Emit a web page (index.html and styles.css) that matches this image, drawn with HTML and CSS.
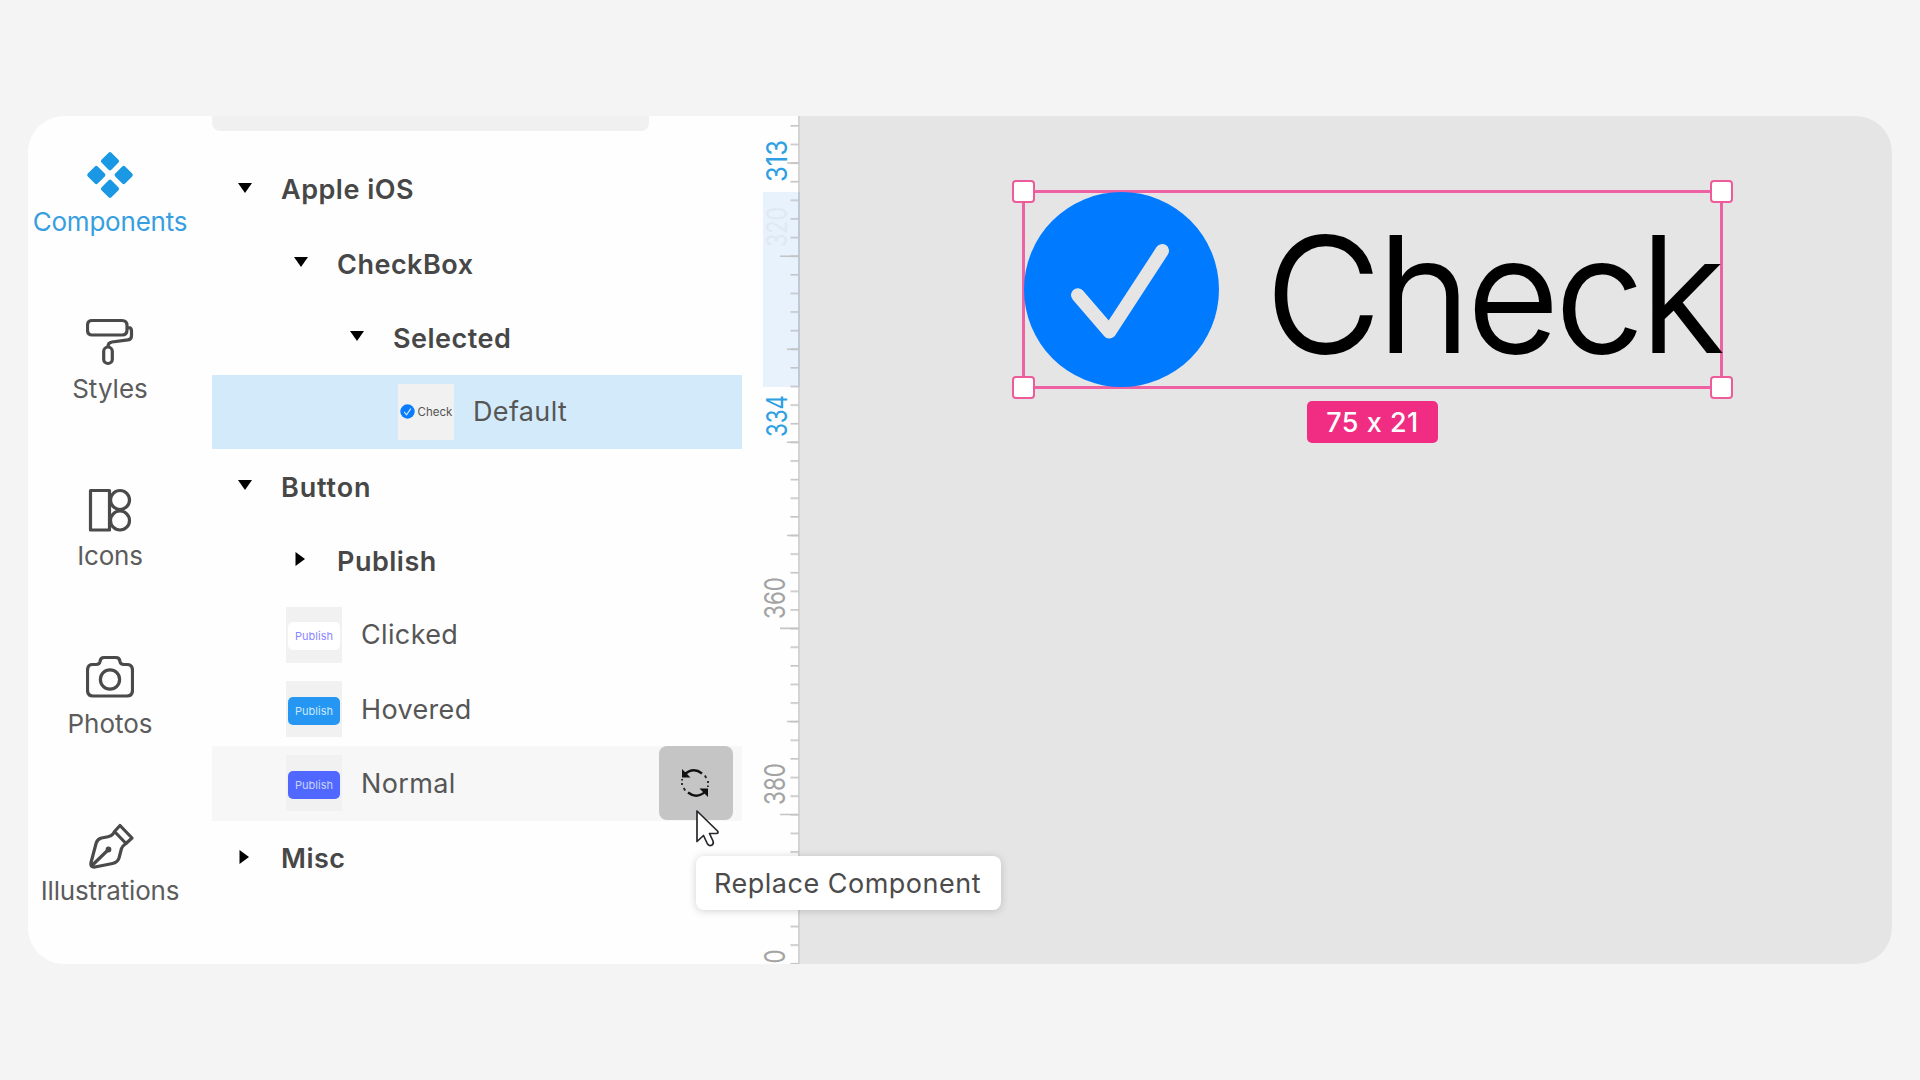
FILE: index.html
```html
<!DOCTYPE html>
<html lang="en">
<head>
<meta charset="utf-8">
<title>Components</title>
<link rel="stylesheet" href="styles.css">
</head>
<body>
<main class="app">
  <nav class="nav">
    <a class="nav-item active">
      <svg class="nav-icon" viewBox="0 0 48 48"><g fill="#1a98e4"><rect x="17" y="3.2" width="14" height="14" rx="2" transform="rotate(45 24 10.2)"/><rect x="3.3" y="17" width="14" height="14" rx="2" transform="rotate(45 10.3 24)"/><rect x="30.7" y="17" width="14" height="14" rx="2" transform="rotate(45 37.7 24)"/><rect x="17" y="30.8" width="14" height="14" rx="2" transform="rotate(45 24 37.8)"/></g></svg>
      <span class="tight">Components</span>
    </a>
    <a class="nav-item">
      <svg class="nav-icon" viewBox="0 0 48 48"><path d="M6 2.5H36Q41 2.5 41 7.500V12Q41 17 36 17H6Q1.500 17 1.500 12V7.500Q1.500 2.500 6 2.500ZM41 9.500H42.500Q45.500 9.500 45.500 13V18Q45.500 21.500 42 21.900L26 24Q22 24.500 22 28.500V29"/><rect x="17.700" y="29" width="8.600" height="16.500" rx="4.300"/></svg>
      <span>Styles</span>
    </a>
    <a class="nav-item">
      <svg class="nav-icon" viewBox="0 0 48 48"><path d="M4.500 4.500H23.500V44H4.500Z"/><circle cx="34" cy="14" r="9.500"/><circle cx="34" cy="34.500" r="9.500"/></svg>
      <span class="tight">Icons</span>
    </a>
    <a class="nav-item">
      <svg class="nav-icon" viewBox="0 0 48 48"><path d="M6.500 11.500H10Q13.500 11.500 14 8.500Q14.500 4.500 18 4.500H30Q33.500 4.500 34 8.500Q34.500 11.500 38 11.500H41Q46.500 11.500 46.500 17.500V37Q46.500 43 41 43H7Q1.500 43 1.500 37V17.500Q1.500 11.500 6.500 11.500Z"/><circle cx="24" cy="26.500" r="9.600"/></svg>
      <span>Photos</span>
    </a>
    <a class="nav-item">
      <svg class="nav-icon" viewBox="0 0 48 48"><path d="M34 4.500L46 17L40 22.500L28.500 10.500ZM28.500 10.500L27 13Q25.500 15 22 15.700L15.500 17Q11.500 18 10.200 22L5 41.500Q4 46.500 9 46L26.500 42.500Q31.500 41.500 33 37L35.500 27.500Q36.300 25 40 22.500M5.500 45L22.500 28.500"/><circle cx="22.500" cy="28.500" r="1.300" fill="#4a4a4a"/></svg>
      <span class="tight">Illustrations</span>
    </a>
  </nav>

  <section class="panel">
    <div class="search"></div>
    <ul class="tree">
      <li class="row group"><svg class="caret" viewBox="0 0 14 14"><path d="M0 1H14L7 11Z"/></svg><span>Apple iOS</span></li>
      <li class="row group level-1"><svg class="caret" viewBox="0 0 14 14"><path d="M0 1H14L7 11Z"/></svg><span>CheckBox</span></li>
      <li class="row group level-2"><svg class="caret" viewBox="0 0 14 14"><path d="M0 1H14L7 11Z"/></svg><span>Selected</span></li>
      <li class="row leaf deep selected">
        <div class="thumb check-thumb"><svg viewBox="0 0 16 16"><circle cx="8" cy="8" r="7.700" fill="#0a7dff"/><path d="M4.500 8.500L7 11.500L11.500 5" fill="none" stroke="#d8e8fa" stroke-width="1.200"/></svg><span>Check</span></div>
        <span>Default</span>
      </li>
      <li class="row group"><svg class="caret" viewBox="0 0 14 14"><path d="M0 1H14L7 11Z"/></svg><span class="wide">Button</span></li>
      <li class="row group level-1"><svg class="caret" viewBox="0 0 14 14"><path d="M1.500 -1V13L11 6Z"/></svg><span>Publish</span></li>
      <li class="row leaf"><div class="thumb"><span class="chip clicked">Publish</span></div><span>Clicked</span></li>
      <li class="row leaf"><div class="thumb"><span class="chip hovered">Publish</span></div><span>Hovered</span></li>
      <li class="row leaf hover">
        <div class="thumb"><span class="chip normal">Publish</span></div><span>Normal</span>
        <button class="replace"><svg viewBox="0 0 30 30"><g fill="none" stroke="#111" stroke-width="2.400"><path d="M4 7Q13 -1.500 22 5.500"/><path d="M26 23Q17 31.500 8 24.500"/></g><path d="M2 1V9.500H10.500ZM28 29V20.500H19.500Z" fill="#111"/><path d="M24.800 7.500L26.300 10M28 13V15M27.900 17.500V19M5.200 22.500L3.700 20M2 17V15M2.100 12.500V11" fill="none" stroke="#222" stroke-width="1.800"/></svg></button>
      </li>
      <li class="row group"><svg class="caret" viewBox="0 0 14 14"><path d="M1.500 -1V13L11 6Z"/></svg><span>Misc</span></li>
    </ul>
  </section>

  <svg class="ruler" viewBox="0 0 38 848">
    <defs>
      <pattern id="ticks" width="9" height="18.620" patternUnits="userSpaceOnUse" x="28" y="9">
        <rect width="9" height="1.600" fill="#c4c4c4"/>
      </pattern>
    </defs>
    <rect x="0" y="76" width="38" height="195" fill="#e7f2fd"/>
    <rect x="27.500" y="8" width="8.500" height="840" fill="url(#ticks)"/>
    <path d="M24 47H36M17 140.200H36M24 233.300H36M24 326.300H36M24 419.500H36M17 512.400H36M24 605.500H36M17 698.500H36M24 791.500H36" stroke="#c4c4c4" stroke-width="1.600"/>
    <path d="M36 0V848" stroke="#c9c9c9" stroke-width="1.600"/>
    <path d="M36 76V271" stroke="#bdc7d3" stroke-width="1.600"/>
    <g class="ruler-text">
      <text class="edge" transform="translate(24 66) rotate(-90)" textLength="42" lengthAdjust="spacingAndGlyphs">313</text>
      <text class="faded" transform="translate(24 131) rotate(-90)" textLength="40" lengthAdjust="spacingAndGlyphs">320</text>
      <text class="edge" transform="translate(24 321) rotate(-90)" textLength="42" lengthAdjust="spacingAndGlyphs">334</text>
      <text transform="translate(22 503) rotate(-90)" textLength="42" lengthAdjust="spacingAndGlyphs">360</text>
      <text transform="translate(22 689) rotate(-90)" textLength="42" lengthAdjust="spacingAndGlyphs">380</text>
      <text transform="translate(22 847.500) rotate(-90)" textLength="14" lengthAdjust="spacingAndGlyphs">0</text>
    </g>
  </svg>

  <section class="canvas">
    <div class="selection">
      <svg class="badge-check" viewBox="0 0 194 194"><circle cx="97" cy="97" r="97" fill="#007bff"/><path d="M53.500 102.500L85 139L137.500 58.500" fill="none" stroke="#e5e5e5" stroke-width="13.500" stroke-linecap="round" stroke-linejoin="round"/></svg>
      <span class="check-label">Check</span>
      <i class="handle tl"></i><i class="handle tr"></i><i class="handle bl"></i><i class="handle br"></i>
      <span class="size"><b>75 x 21</b></span>
    </div>
  </section>

  <div class="tooltip"><span>Replace Component</span></div>
  <svg class="cursor" viewBox="0 0 26 40"><path d="M2 2V32.500L8.500 26.500L12.500 35Q14.500 37.500 17 36Q19 34.500 18 32L14.500 24.500H21.500Q24 24 22.500 22Z" fill="#fff" stroke="#26262c" stroke-width="1.700" stroke-linejoin="round"/></svg>
</main>
</body>
</html>
```

FILE: styles.css
```css
* { box-sizing: border-box; }

body {
  margin: 0;
  height: 1080px;
  display: flex;
  justify-content: center;
  align-items: center;
  background: #f4f4f4;
  overflow: hidden;
  font-family: Inter, "Liberation Sans", sans-serif;
  font-size: 27px;
  font-feature-settings: "calt" 0;
  color: #4b4b4b;
}

.app {
  position: relative;
  display: flex;
  width: 1864px;
  height: 848px;
  border-radius: 36px;
  background: #fefefe;
  overflow: hidden;
}

/* left navigation */
.nav {
  width: 164px;
  padding-top: 35px;
  flex: none;
}
.nav-item {
  display: flex;
  flex-direction: column;
  align-items: center;
  height: 167.4px;
  gap: 6.6px;
  font-size: 26px;
  line-height: 32px;
  color: #5c5c5c;
  white-space: nowrap;
}
.nav-item .tight { letter-spacing: -.2px; }
.nav-item.active { color: #379fe0; }
.nav-icon {
  width: 48px;
  height: 48px;
  fill: none;
  stroke: #4a4a4a;
  stroke-width: 3.2;
  stroke-linejoin: round;
}
.nav-item.active .nav-icon { stroke: none; }

/* component tree */
.panel {
  width: 530px;
  margin-left: 20px;
  flex: none;
}
.search {
  width: 437px;
  height: 15px;
  border-radius: 0 0 8px 8px;
  background: #f0f0f0;
}
.tree {
  list-style: none;
  margin: 20.5px 0 0;
  padding: 0;
}
.row {
  display: flex;
  align-items: center;
  height: 74.35px;
  white-space: nowrap;
}
.group { padding-left: 26px; gap: 29px; font-weight: 600; color: #474747; }
.group span { padding-top: 2.4px; letter-spacing: .5px; }
.group .wide { letter-spacing: .85px; }
.level-1 { padding-left: 82px; }
.level-2 { padding-left: 138px; }
.caret { width: 14px; height: 14px; overflow: visible; fill: #000; }
.leaf { padding-left: 74px; gap: 19px; color: #565656; letter-spacing: .35px; }
.deep { padding-left: 186px; }
.selected { background: #d3eafa; }
.hover { background: #f7f7f7; padding-right: 9px; }
.thumb {
  display: flex;
  align-items: center;
  justify-content: center;
  width: 56px;
  height: 56px;
  background: #f1f1f1;
  letter-spacing: 0;
}
.check-thumb { gap: 3px; font-size: 11.5px; color: #555; }
.check-thumb svg { width: 15px; height: 15px; flex: none; }
.chip {
  width: 52px;
  height: 28px;
  margin-top: 3px;
  border-radius: 5px;
  font-size: 11px;
  line-height: 28px;
  text-align: center;
}
.clicked { background: #fff; color: #8a86ff; }
.hovered { background: #2596f2; color: #cbe8ff; }
.normal { background: #5068ff; color: #ccd3ff; }
.replace {
  display: flex;
  align-items: center;
  justify-content: center;
  width: 74px;
  height: 74px;
  margin-left: auto;
  padding: 0 2px 1px 0;
  border: 0;
  border-radius: 8px;
  background: #c5c5c5;
}
.replace svg { width: 30px; height: 30px; }

/* vertical ruler */
.ruler {
  width: 38px;
  height: 848px;
  margin-left: 21px;
  flex: none;
  overflow: visible;
}
.ruler-text { font-size: 28px; fill: #a3a3a3; }
.ruler-text .edge { fill: #2f9fe4; }
.ruler-text .faded { fill: #dfe9f3; }

/* artboard */
.canvas {
  position: relative;
  flex: 1;
  margin-left: -1.5px;
  background: #e5e5e5;
}
.selection {
  position: absolute;
  left: 222.5px;
  top: 74px;
  width: 701px;
  height: 199px;
  border: 3px solid #ee62a3;
  z-index: 0;
}
.badge-check {
  position: absolute;
  left: -1px;
  top: -1px;
  width: 195px;
  height: 195px;
  z-index: -1;
}
.check-label {
  position: absolute;
  left: 240.5px;
  top: 5px;
  z-index: -1;
  font-size: 159px;
  font-weight: 300;
  -webkit-text-stroke: 1.8px #000;
  line-height: 192px;
  letter-spacing: -4px;
  color: #000;
}
.handle {
  position: absolute;
  width: 23px;
  height: 23px;
  border: 2.500px solid #ee5b9a;
  border-radius: 4px;
  background: #fff;
}
.tl { left: -13px; top: -13px; }
.tr { right: -13px; top: -13px; }
.bl { left: -13px; bottom: -13px; }
.br { right: -13px; bottom: -13px; }
.size {
  position: absolute;
  left: 282px;
  top: 208px;
  width: 131px;
  height: 42px;
  border-radius: 5px;
  background: #f02d82;
  color: #fff;
  text-align: center;
  line-height: 43px;
  letter-spacing: .5px;
}
.size b { font-weight: 500; }

.tooltip {
  position: absolute;
  left: 668px;
  top: 740px;
  width: 305px;
  height: 54px;
  padding-left: 18px;
  border-radius: 8px;
  background: #fff;
  box-shadow: 0 1px 8px rgba(0, 0, 0, .18);
  line-height: 56px;
  letter-spacing: .5px;
  white-space: nowrap;
}
.cursor {
  position: absolute;
  left: 667px;
  top: 693px;
  width: 26px;
  height: 40px;
}
```
